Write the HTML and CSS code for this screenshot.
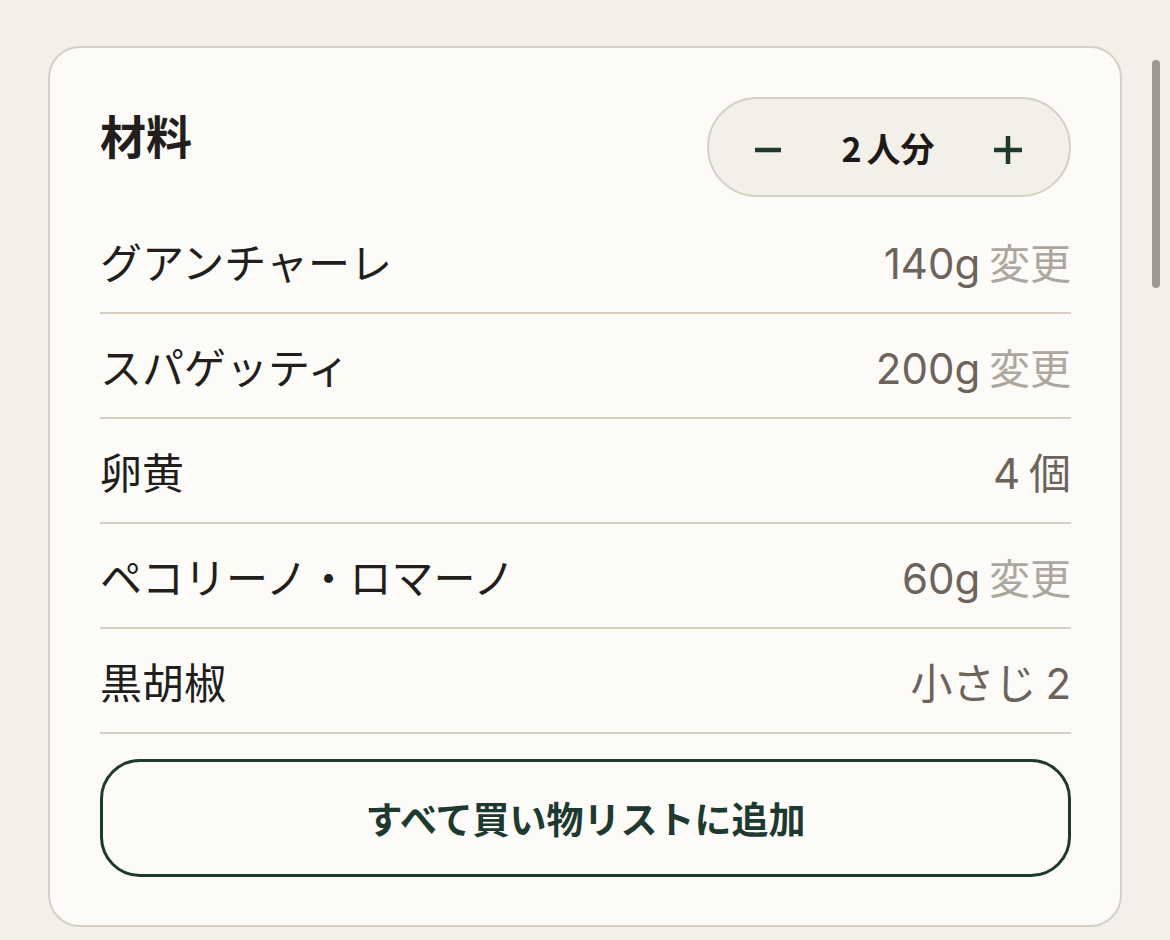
FILE: index.html
```html
<!DOCTYPE html>
<html lang="ja">
<head>
    <meta charset="UTF-8">
    <meta name="viewport" content="width=device-width, initial-scale=1.0">
    <title>材料</title>
    <link rel="stylesheet" href="styles.css">
</head>
<body>
    <section class="card">
        <div class="card-head">
            <h2 class="title">材料</h2>
            <div class="servings">
                <button class="step" aria-label="減らす">
                    <svg width="28" height="28" viewBox="0 0 28 28"><path d="M1 14h26" stroke="#1e3a30" stroke-width="4.5" stroke-linecap="butt"/></svg>
                </button>
                <span class="count">2 人分</span>
                <button class="step" aria-label="増やす">
                    <svg width="30" height="30" viewBox="0 0 30 30"><path d="M1 15h28M15 1v28" stroke="#1e3a30" stroke-width="4.5" stroke-linecap="butt"/></svg>
                </button>
            </div>
        </div>

        <ul class="ingredients">
            <li class="row">
                <span class="name">グアンチャーレ</span>
                <span class="amount">140g <span class="swap">変更</span></span>
            </li>
            <li class="row">
                <span class="name">スパゲッティ</span>
                <span class="amount">200g <span class="swap">変更</span></span>
            </li>
            <li class="row">
                <span class="name">卵黄</span>
                <span class="amount">4 個</span>
            </li>
            <li class="row">
                <span class="name">ペコリーノ・ロマーノ</span>
                <span class="amount">60g <span class="swap">変更</span></span>
            </li>
            <li class="row">
                <span class="name">黒胡椒</span>
                <span class="amount">小さじ 2</span>
            </li>
        </ul>

        <button class="add-all">すべて買い物リストに追加</button>
    </section>

    <div class="scrollbar"></div>
</body>
</html>
```

FILE: styles.css
```css
body {
    margin: 0;
    padding: 46px 48px 40px 48px;
    background: #f3efe9;
    font-family: "Inter", "Noto Sans CJK JP", sans-serif;
    color: #221e1b;
}

.card {
    background: #fcfbf8;
    border: 2px solid #d8cfc4;
    border-radius: 32px;
    padding: 49px 49px 48px 50px;
}

.card-head {
    display: flex;
    justify-content: space-between;
    align-items: flex-start;
}

.title {
    margin: 0;
    font-family: "Noto Sans CJK JP", sans-serif;
    font-size: 46px;
    font-weight: 700;
    line-height: 74px;
}

.servings {
    flex: 0 0 364px;
    height: 100px;
    box-sizing: border-box;
    border: 2px solid #d8cfc4;
    border-radius: 50px;
    background: #f3efe9;
    display: flex;
    align-items: center;
    justify-content: space-between;
    padding: 0 37px 0 35px;
}

.step {
    background: none;
    border: none;
    padding: 0;
    width: 48px;
    height: 48px;
    display: flex;
    align-items: center;
    justify-content: center;
    margin-top: 6px;
    cursor: pointer;
}

.count {
    font-family: "Noto Sans CJK JP", sans-serif;
    font-size: 34px;
    font-weight: 700;
    color: #1c1916;
    word-spacing: -3px;
}

.ingredients {
    list-style: none;
    margin: 12px 0 0;
    padding: 0;
}

.row {
    height: 103px;
    border-bottom: 2px solid #d8cfc4;
    display: flex;
    justify-content: space-between;
    align-items: center;
}

.name {
    font-family: "Noto Sans CJK JP", sans-serif;
    font-size: 42px;
}

.amount {
    font-size: 42px;
    color: #6d635b;
    word-spacing: -3px;
}

.swap {
    font-family: "Noto Sans CJK JP", sans-serif;
    font-size: 41px;
    color: #aea69d;
}

.add-all {
    display: block;
    width: 100%;
    height: 118px;
    margin-top: 25px;
    background: #fcfbf8;
    border: 3px solid #1e3a30;
    border-radius: 40px;
    font-family: "Noto Sans CJK JP", sans-serif;
    font-size: 37px;
    font-weight: 700;
    color: #1e3a30;
    cursor: pointer;
}

.scrollbar {
    position: fixed;
    top: 60px;
    right: 10px;
    width: 8px;
    height: 228px;
    border-radius: 4px;
    background: #9c9894;
}
```
